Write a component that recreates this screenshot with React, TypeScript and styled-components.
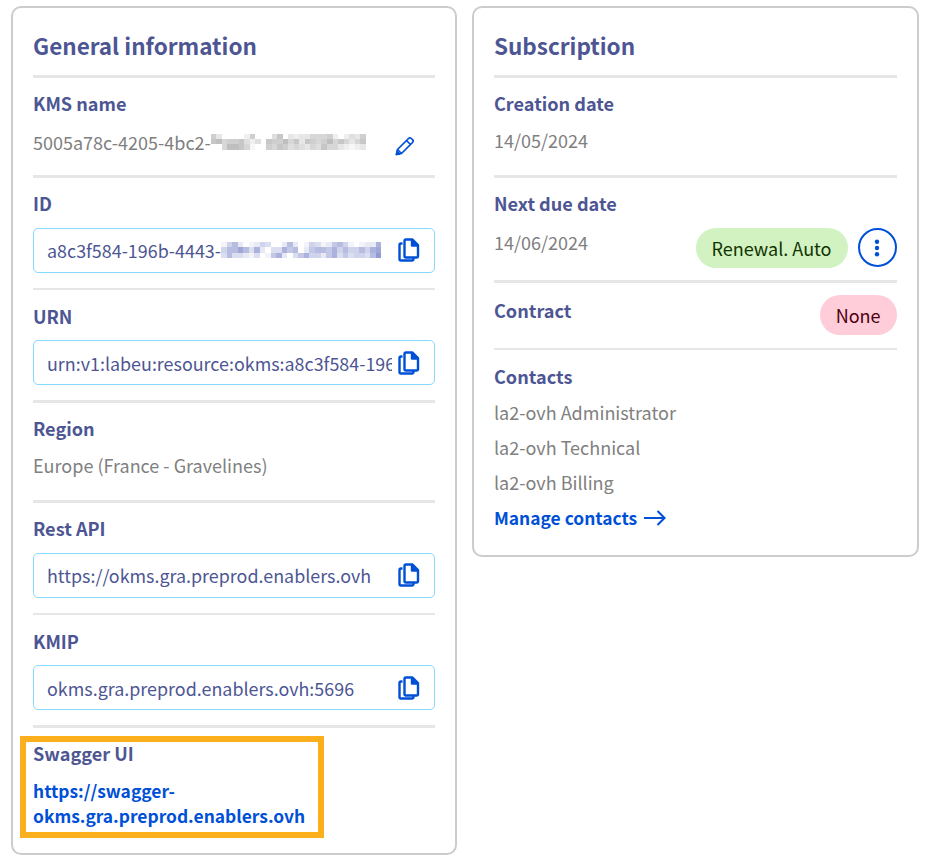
import styled, { createGlobalStyle } from "styled-components";

const GlobalStyle = createGlobalStyle`
  html, body {
    margin: 0;
    padding: 0;
    background: #fff;
  }
  body {
    font-family: "Noto Sans CJK SC", "Source Sans Pro", "Noto Sans", sans-serif;
  }
`;

const Colors = {
  label: "#4d5693",
  text: "#808080",
  link: "#0050d7",
  divider: "#e6e6e6",
  cardBorder: "#cccccc",
  inputBorder: "#85d9fd",
};

// blurred part of the ids, one hex digit per cell (0 = white, f = darkest)
const kmsMosaic = [
  "6300002600047032335556202436",
  "7856674240766857376568575357",
  "0058875100657645435475532123",
];
const idMosaic = [
  "14620124300262014312564101227",
  "46686372033756025665746446478",
  "36332130157203574425735344369",
];

const cellColor = (hex: string, blue: boolean): string => {
  const h = parseInt(hex, 16);
  const v = 255 - h * 8;
  return blue ? `rgb(${v - h * 4}, ${v - h * 3}, ${v + h * 3})` : `rgb(${v}, ${v}, ${v})`;
};

const Mosaic = ({ rows, blue }: { rows: string[]; blue?: boolean }): JSX.Element => (
  <MosaicGrid>
    {rows.map((row, r) => (
      <MosaicRow key={r}>
        {row.split("").map((hex, i) => (
          <span key={i} style={{ background: cellColor(hex, !!blue) }} />
        ))}
      </MosaicRow>
    ))}
  </MosaicGrid>
);

const CopyIcon = (): JSX.Element => (
  <svg width="22" height="24" viewBox="0 0 22 24" fill="none" stroke={Colors.link} strokeWidth="2.4" strokeLinejoin="round">
    <path d="M4.5 5.5H3a1.5 1.5 0 0 0-1.5 1.5v14a1.5 1.5 0 0 0 1.5 1.5h11a1.5 1.5 0 0 0 1.5-1.5v-1" />
    <path d="M6.5 3a1.5 1.5 0 0 1 1.5-1.5h6.5l5.5 5.5v11a1.5 1.5 0 0 1-1.5 1.5H8a1.5 1.5 0 0 1-1.5-1.5z" />
    <path d="M14 1.5v6h6" fill={Colors.link} />
  </svg>
);

const PencilIcon = (): JSX.Element => (
  <svg width="20" height="20" viewBox="0 0 20 20" fill="none" stroke={Colors.link} strokeWidth="1.7" strokeLinejoin="round">
    <path d="M1.5 18.5l1-5L13.5 2.5a2 2 0 0 1 2.8 0l1.2 1.2a2 2 0 0 1 0 2.8L6.5 17.5z" />
    <path d="M11.5 4.5l4 4M2.5 13.5l4 4" />
    <path d="M1.5 18.5l.6-3 2.4 2.4z" fill={Colors.link} />
  </svg>
);

const ArrowIcon = (): JSX.Element => (
  <svg width="22" height="16" viewBox="0 0 22 16" fill="none" stroke={Colors.link} strokeWidth="2.1">
    <path d="M0 8h20M13.5 1l7 7-7 7" />
  </svg>
);

const DotsIcon = (): JSX.Element => (
  <svg width="6" height="18" viewBox="0 0 6 18" fill={Colors.link}>
    <circle cx="3" cy="2.8" r="2.2" />
    <circle cx="3" cy="9" r="2.2" />
    <circle cx="3" cy="15.2" r="2.2" />
  </svg>
);

const App = (): JSX.Element => {
  return (
    <Page>
      <GlobalStyle />
      <Card>
        <CardTitle>General information</CardTitle>
        <Divider />
        <ValueSection>
          <Label>KMS name</Label>
          <NameRow>
            <Value>5005a78c-4205-4bc2-</Value>
            <Mosaic rows={kmsMosaic} />
            <EditButton><PencilIcon /></EditButton>
          </NameRow>
        </ValueSection>
        <Divider />
        <InputSection>
          <Label>ID</Label>
          <CopyBox>
            <CopyText>
              a8c3f584-196b-4443-
              <Mosaic rows={idMosaic} blue />
            </CopyText>
            <CopyButton><CopyIcon /></CopyButton>
          </CopyBox>
        </InputSection>
        <Divider />
        <InputSection>
          <Label>URN</Label>
          <CopyBox>
            <CopyText>urn:v1:labeu:resource:okms:a8c3f584-196b-4443</CopyText>
            <CopyButton><CopyIcon /></CopyButton>
          </CopyBox>
        </InputSection>
        <Divider />
        <ValueSection>
          <Label>Region</Label>
          <Value>Europe (France - Gravelines)</Value>
        </ValueSection>
        <Divider />
        <InputSection>
          <Label>Rest API</Label>
          <CopyBox>
            <CopyText>https://okms.gra.preprod.enablers.ovh</CopyText>
            <CopyButton><CopyIcon /></CopyButton>
          </CopyBox>
        </InputSection>
        <Divider />
        <InputSection>
          <Label>KMIP</Label>
          <CopyBox>
            <CopyText>okms.gra.preprod.enablers.ovh:5696</CopyText>
            <CopyButton><CopyIcon /></CopyButton>
          </CopyBox>
        </InputSection>
        <Divider />
        <SwaggerSection>
          <Highlight />
          <Label>Swagger UI</Label>
          <SwaggerLink href="#">
            https://swagger-
            <br />
            okms.gra.preprod.enablers.ovh
          </SwaggerLink>
        </SwaggerSection>
      </Card>

      <Card>
        <CardTitle>Subscription</CardTitle>
        <Divider />
        <ValueSection>
          <Label>Creation date</Label>
          <Value>14/05/2024</Value>
        </ValueSection>
        <Divider />
        <DueSection>
          <Label>Next due date</Label>
          <DueRow>
            <DueDate>14/06/2024</DueDate>
            <DueActions>
              <Tag $tone="success">Renewal. Auto</Tag>
              <RoundButton><DotsIcon /></RoundButton>
            </DueActions>
          </DueRow>
        </DueSection>
        <Divider />
        <ContractRow>
          <ContractLabel>Contract</ContractLabel>
          <Tag $tone="error">None</Tag>
        </ContractRow>
        <ThinDivider />
        <ContactsSection>
          <Label>Contacts</Label>
          <ContactList>
            <Value>la2-ovh Administrator</Value>
            <Value>la2-ovh Technical</Value>
            <Value>la2-ovh Billing</Value>
          </ContactList>
          <ManageLink href="#">
            Manage contacts
            <ArrowIcon />
          </ManageLink>
        </ContactsSection>
      </Card>
    </Page>
  );
};

export default App;

const Page = styled.div`
  display: grid;
  grid-template-columns: 445.5px 446.5px;
  column-gap: 15.5px;
  align-items: start;
  width: 931px;
  box-sizing: border-box;
  padding: 6px 0 0 11px;
`;

const Card = styled.section`
  box-sizing: border-box;
  border: 2px solid ${Colors.cardBorder};
  border-radius: 10px;
  padding: 0 20px;
`;

const CardTitle = styled.h2`
  margin: 0;
  height: 67px;
  padding-top: 21px;
  box-sizing: border-box;
  font-size: 22.5px;
  line-height: 32px;
  font-weight: 700;
  color: ${Colors.label};
`;

const Divider = styled.div`
  height: 2.6px;
  background: ${Colors.divider};
`;

const ThinDivider = styled(Divider)`
  height: 2px;
`;

const Label = styled.div`
  font-size: 18.1px;
  line-height: 24px;
  font-weight: 700;
  color: ${Colors.label};
`;

const Value = styled.div`
  font-size: 18px;
  line-height: 24px;
  font-weight: 400;
  color: ${Colors.text};
`;

const ValueSection = styled.div`
  display: flex;
  flex-direction: column;
  gap: 13px;
  box-sizing: border-box;
  height: 97.33px;
  padding-top: 13px;
`;

const InputSection = styled.div`
  display: flex;
  flex-direction: column;
  gap: 12.6px;
  box-sizing: border-box;
  height: 110px;
  padding-top: 13.4px;
`;

const NameRow = styled.div`
  display: flex;
  align-items: center;
`;

const EditButton = styled.span`
  display: flex;
  margin-left: auto;
  margin-right: 20px;
  margin-top: 8px;
`;

const MosaicGrid = styled.div`
  display: flex;
  flex-direction: column;
  flex: none;
`;

const MosaicRow = styled.div`
  display: flex;
  height: 5.33px;
  > span {
    display: block;
    flex: none;
    width: 5.54px;
    height: 100%;
  }
`;

const CopyBox = styled.div`
  display: flex;
  align-items: center;
  justify-content: space-between;
  box-sizing: border-box;
  height: 45px;
  padding: 0 14px 0 13px;
  border: 1px solid ${Colors.inputBorder};
  border-radius: 5px;
`;

const CopyText = styled.div`
  display: flex;
  align-items: center;
  flex: none;
  width: 345px;
  overflow: hidden;
  white-space: nowrap;
  font-size: 17.9px;
  line-height: 24px;
  color: ${Colors.label};
`;

const CopyButton = styled.span`
  display: flex;
  flex: none;
`;

const SwaggerSection = styled.div`
  position: relative;
  display: flex;
  flex-direction: column;
  gap: 13px;
  padding: 13px 0 25px;
`;

const Highlight = styled.div`
  position: absolute;
  left: -13px;
  top: 8px;
  width: 304px;
  height: 102px;
  box-sizing: border-box;
  border: 6px solid #fbaf1c;
  pointer-events: none;
`;

const SwaggerLink = styled.a`
  font-size: 17.4px;
  line-height: 25px;
  font-weight: 700;
  color: ${Colors.link};
  text-decoration: none;
`;

const DueSection = styled.div`
  display: flex;
  flex-direction: column;
  gap: 13px;
  box-sizing: border-box;
  height: 102.4px;
  padding-top: 13px;
`;

const DueRow = styled.div`
  display: flex;
  justify-content: space-between;
  align-items: flex-start;
`;

const DueDate = styled(Value)`
  margin-top: 2px;
`;

const DueActions = styled.div`
  display: flex;
  align-items: center;
  gap: 10px;
`;

const Tag = styled.span<{ $tone: "success" | "error" }>`
  display: inline-flex;
  align-items: center;
  height: 40px;
  padding: 0 16px;
  border-radius: 20px;
  font-size: 18px;
  background: ${({ $tone }) => ($tone === "success" ? "#d2f2c2" : "#ffccd9")};
  color: ${({ $tone }) => ($tone === "success" ? "#113300" : "#4d000d")};
`;

const RoundButton = styled.span`
  display: flex;
  align-items: center;
  justify-content: center;
  box-sizing: border-box;
  width: 39px;
  height: 39px;
  border: 2px solid ${Colors.link};
  border-radius: 50%;
`;

const ContractRow = styled.div`
  display: flex;
  justify-content: space-between;
  align-items: flex-start;
  box-sizing: border-box;
  height: 65px;
  padding-top: 12px;
`;

const ContractLabel = styled(Label)`
  margin-top: 3px;
`;

const ContactsSection = styled.div`
  display: flex;
  flex-direction: column;
  padding: 14.4px 0 25.6px;
`;

const ContactList = styled.div`
  display: flex;
  flex-direction: column;
  gap: 11px;
  margin-top: 12px;
`;

const ManageLink = styled.a`
  display: flex;
  align-items: center;
  gap: 7px;
  margin-top: 12px;
  font-size: 17.4px;
  line-height: 24px;
  font-weight: 700;
  color: ${Colors.link};
  text-decoration: none;
`;
